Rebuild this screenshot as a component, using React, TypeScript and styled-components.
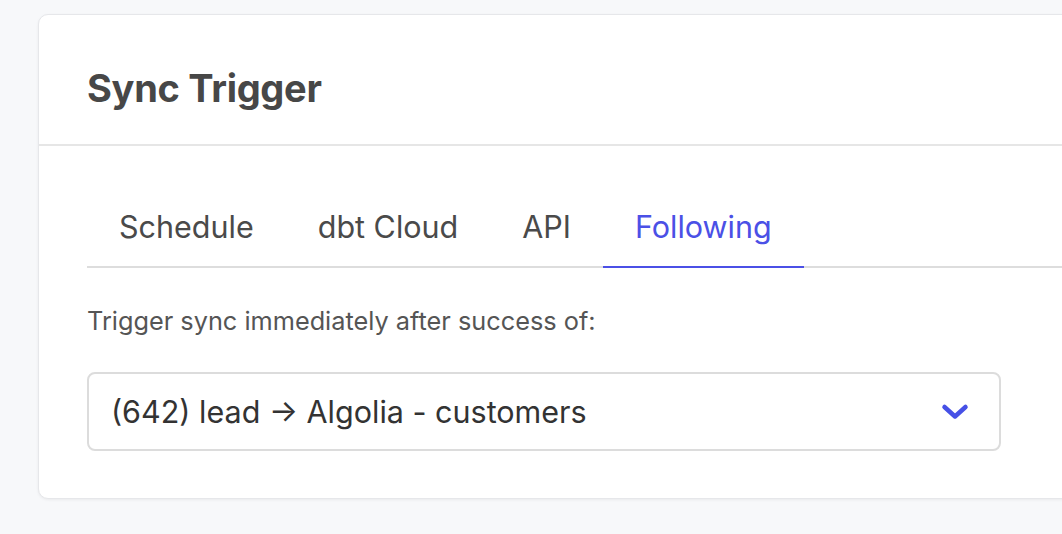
import React from "react";
import styled, { createGlobalStyle } from "styled-components";

const Global = createGlobalStyle`
  html, body { margin: 0; padding: 0; background: #f7f8fa; }
  body { font-family: Inter, "Noto Sans", sans-serif; -webkit-font-smoothing: antialiased; }
  * { box-sizing: border-box; }
`;

const Page = styled.div`
  width: 1062px;
  height: 534px;
  overflow: hidden;
  padding: 14px 0 0 38px;
`;

const Card = styled.section`
  width: 1100px;
  height: 485px;
  background: #fff;
  border: 1px solid #e6e7ea;
  border-radius: 10px;
  box-shadow: 0 1px 3px rgba(0, 0, 0, 0.06);
  display: flex;
  flex-direction: column;
`;

const Header = styled.header`
  height: 131px;
  border-bottom: 2px solid #e6e6e6;
  display: flex;
  align-items: center;
  padding: 16px 0 0 48px;
`;

const Title = styled.h2`
  margin: 0;
  font-size: 38px;
  font-weight: 700;
  color: #474747;
  letter-spacing: -0.3px;
`;

const Body = styled.div`
  padding: 0 0 0 48px;
`;

const Tabs = styled.nav`
  display: flex;
  margin-top: 61px;
  border-bottom: 2px solid #dddddd;
`;

const Tab = styled.div<{ $active?: boolean }>`
  padding: 0 32px 19px;
  font-size: 30.5px;
  line-height: 40px;
  color: ${(p) => (p.$active ? "#4b50e6" : "#4a4a4a")};
  margin-bottom: -2px;
  border-bottom: 2px solid ${(p) => (p.$active ? "#4b50e6" : "transparent")};
`;

const Label = styled.p`
  margin: 38px 0 0;
  font-size: 25.3px;
  line-height: 30px;
  color: #555555;
`;

const Select = styled.div`
  margin-top: 36px;
  width: 914px;
  height: 79px;
  border: 2px solid #dcdcdc;
  border-radius: 8px;
  display: flex;
  align-items: center;
  justify-content: space-between;
  padding: 0 30px 0 22px;
  font-size: 30.5px;
  color: #333333;
`;

const Chevron = () => (
  <svg width="28" height="18" viewBox="0 0 28 18" fill="none">
    <path d="M3.5 4 L14 13.5 L24.5 4" stroke="#4650e6" strokeWidth="4.5" strokeLinecap="round" strokeLinejoin="round" />
  </svg>
);

export default function App() {
  return (
    <Page>
      <Global />
      <Card>
        <Header>
          <Title>Sync Trigger</Title>
        </Header>
        <Body>
          <Tabs>
            <Tab>Schedule</Tab>
            <Tab>dbt Cloud</Tab>
            <Tab>API</Tab>
            <Tab $active>Following</Tab>
          </Tabs>
          <Label>Trigger sync immediately after success of:</Label>
          <Select>
            <span>(642) lead → Algolia - customers</span>
            <Chevron />
          </Select>
        </Body>
      </Card>
    </Page>
  );
}
